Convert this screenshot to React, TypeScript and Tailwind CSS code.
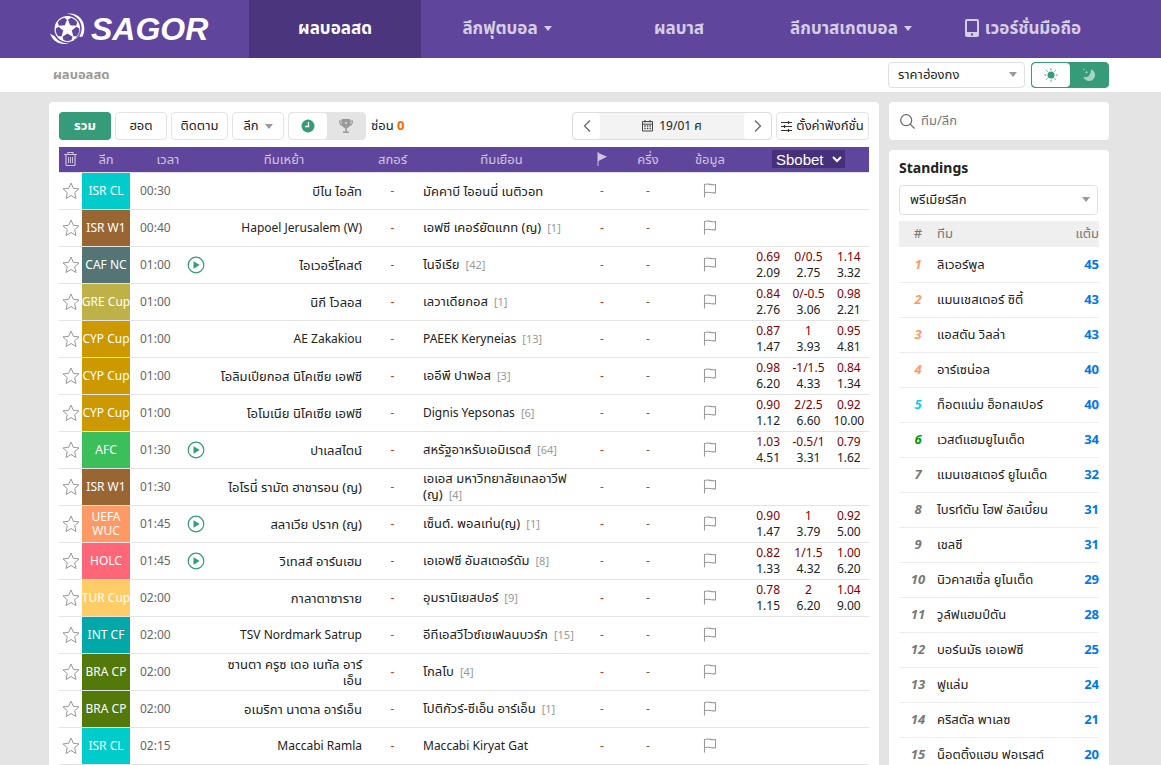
import type { ReactNode } from 'react';

interface Match {
  league: string;
  color: string;
  time: string;
  live?: boolean;
  home: string;
  away: string;
  rank?: number;
  odds?: string[][];
}

const MATCHES: Match[] = [
  { league: 'ISR CL', color: 'bg-[#00cccc]', time: '00:30', home: 'บีไน ไอลัท', away: 'มัคคาบี ไออนนี่ เนติวอท' },
  { league: 'ISR W1', color: 'bg-[#996633]', time: '00:40', home: 'Hapoel Jerusalem (W)', away: 'เอฟซี เคอร์ยัตแกท (ญ)', rank: 1 },
  { league: 'CAF NC', color: 'bg-[#557575]', time: '01:00', live: true, home: 'ไอเวอรี่โคสต์', away: 'ไนจีเรีย', rank: 42, odds: [['0.69', '0/0.5', '1.14'], ['2.09', '2.75', '3.32']] },
  { league: 'GRE Cup', color: 'bg-[#bdb147]', time: '01:00', home: 'นิกี โวลอส', away: 'เลวาเดียกอส', rank: 1, odds: [['0.84', '0/-0.5', '0.98'], ['2.76', '3.06', '2.21']] },
  { league: 'CYP Cup', color: 'bg-[#cc9900]', time: '01:00', home: 'AE Zakakiou', away: 'PAEEK Keryneias', rank: 13, odds: [['0.87', '1', '0.95'], ['1.47', '3.93', '4.81']] },
  { league: 'CYP Cup', color: 'bg-[#cc9900]', time: '01:00', home: 'โอลิมเปียกอส นิโคเซีย เอฟซี', away: 'เออีพี ปาฟอส', rank: 3, odds: [['0.98', '-1/1.5', '0.84'], ['6.20', '4.33', '1.34']] },
  { league: 'CYP Cup', color: 'bg-[#cc9900]', time: '01:00', home: 'โอโมเนีย นิโคเซีย เอฟซี', away: 'Dignis Yepsonas', rank: 6, odds: [['0.90', '2/2.5', '0.92'], ['1.12', '6.60', '10.00']] },
  { league: 'AFC', color: 'bg-[#3abf5b]', time: '01:30', live: true, home: 'ปาเลสไตน์', away: 'สหรัฐอาหรับเอมิเรตส์', rank: 64, odds: [['1.03', '-0.5/1', '0.79'], ['4.51', '3.31', '1.62']] },
  { league: 'ISR W1', color: 'bg-[#996633]', time: '01:30', home: 'ไอโรนี่ รามัต ฮาชารอน (ญ)', away: 'เอเอส มหาวิทยาลัยเทลอาวีฟ (ญ)', rank: 4 },
  { league: 'UEFA WUC', color: 'bg-[#ff9966]', time: '01:45', live: true, home: 'สลาเวีย ปราก (ญ)', away: 'เซ็นต์. พอลเท่น(ญ)', rank: 1, odds: [['0.90', '1', '0.92'], ['1.47', '3.79', '5.00']] },
  { league: 'HOLC', color: 'bg-[#ff6677]', time: '01:45', live: true, home: 'วิเทสส์ อาร์นเฮม', away: 'เอเอฟซี อัมสเตอร์ดัม', rank: 8, odds: [['0.82', '1/1.5', '1.00'], ['1.33', '4.32', '6.20']] },
  { league: 'TUR Cup', color: 'bg-[#ffcc66]', time: '02:00', home: 'กาลาตาซาราย', away: 'อุมรานิเยสปอร์', rank: 9, odds: [['0.78', '2', '1.04'], ['1.15', '6.20', '9.00']] },
  { league: 'INT CF', color: 'bg-[#00a8a8]', time: '02:00', home: 'TSV Nordmark Satrup', away: 'อีทีเอสวีไวซ์เชเฟลนบวร์ก', rank: 15 },
  { league: 'BRA CP', color: 'bg-[#54790b]', time: '02:00', home: 'ซานตา ครูซ เดอ เนทัล อาร์เอ็น', away: 'โกลโบ', rank: 4 },
  { league: 'BRA CP', color: 'bg-[#54790b]', time: '02:00', home: 'อเมริกา นาตาล อาร์เอ็น', away: 'โปติกัวร์-ซีเอ็น อาร์เอ็น', rank: 1 },
  { league: 'ISR CL', color: 'bg-[#00cccc]', time: '02:15', home: 'Maccabi Ramla', away: 'Maccabi Kiryat Gat' },
];

const STANDINGS: [string, number, string][] = [
  ['ลิเวอร์พูล', 45, 'text-[#ff9966]'],
  ['แมนเชสเตอร์ ซิตี้', 43, 'text-[#ff9966]'],
  ['แอสตัน วิลล่า', 43, 'text-[#ff9966]'],
  ['อาร์เซน่อล', 40, 'text-[#ff9966]'],
  ['ท็อตแน่ม ฮ็อทสเปอร์', 40, 'text-[#00ccff]'],
  ['เวสต์แฮมยูไนเต็ด', 34, 'text-[#009900]'],
  ['แมนเชสเตอร์ ยูไนเต็ด', 32, 'text-[#777]'],
  ['ไบรท์ตัน โฮฟ อัลเบี้ยน', 31, 'text-[#777]'],
  ['เชลซี', 31, 'text-[#777]'],
  ['นิวคาสเซิ่ล ยูไนเต็ด', 29, 'text-[#777]'],
  ['วูล์ฟแฮมป์ตัน', 28, 'text-[#777]'],
  ['บอร์นมัธ เอเอฟซี', 25, 'text-[#777]'],
  ['ฟูแล่ม', 24, 'text-[#777]'],
  ['คริสตัล พาเลซ', 21, 'text-[#777]'],
  ['น็อตติ้งแฮม ฟอเรสต์', 20, 'text-[#777]'],
];

const BUTTON = 'flex h-7 items-center justify-center rounded border border-[#e4e4e4] bg-white text-[13px]';

// Thai glyphs look smaller than Latin ones at the same size
const nameSize = (name: string) => (/[\u0e00-\u0e7f]/.test(name) ? 'text-[13px]' : 'text-xs');

function Caret({ className = '' }: { className?: string }) {
  return (
    <svg className={className} width="8" height="5" viewBox="0 0 8 5" fill="currentColor" aria-hidden="true">
      <path d="M0 0h8L4 5z" />
    </svg>
  );
}

function Logo() {
  return (
    <a href="#" className="flex w-[200px] shrink-0 items-center text-white">
      <svg width="38" height="34" viewBox="0 0 38 34" aria-hidden="true">
        <circle cx="18.5" cy="17" r="13" fill="#fff" />
        <g fill="#5f459c">
          {[0, 72, 144, 216, 288].map((angle) => (
            <path key={angle} transform={`translate(18.5 17) rotate(${angle})`} d="M0 4.500L5 7.800 4 11Q0 12.800-4 11L-5 7.800z" />
          ))}
        </g>
        <path d="M18 1.800c9.600-2 17.800 5.400 17.300 15.700-.1 2.600-.8 4.800-1.800 7-1.100.5-2.200.5-3.200 0 3.300-5.200 3.200-12.400-.8-17C26.700 4.200 23 2.100 18 1.800z" fill="#fff" />
        <path d="M1 21.500c1.700 1.900 4.400 1.500 5.400 3.700C9.600 30 15.700 32 21.500 30.600c-8 3.500-17.200.4-20.500-9.100z" fill="#fff" />
        <path d="M17.500 3.300c6.700-.8 12.700 4.200 13.800 10.600 1 5.700-1.800 11.300-6.500 14.300" fill="none" stroke="#5f459c" strokeWidth=".8" />
      </svg>
      <span className="pl-1 font-['Liberation_Sans',Arial,sans-serif] text-[32px] leading-9 font-bold italic">SAGOR</span>
    </a>
  );
}

function Star() {
  return (
    <svg width="18" height="18" viewBox="0 0 18 18" fill="none" stroke="#999" strokeWidth="1" strokeLinejoin="round" aria-hidden="true">
      <path d="M9 1l2.300 5.300 5.700.6-4.300 3.800L14 16.500 9 13.500l-5 3 1.300-5.800L1 6.900l5.700-.6z" />
    </svg>
  );
}

function Flag() {
  return (
    <svg width="14" height="15" viewBox="0 0 14 15" fill="none" stroke="#9a9a9a" strokeWidth="1.100" aria-hidden="true">
      <path d="M1.500 14.500V1.500c4-1.700 6.500 1.200 11 .1v8c-4.500 1.200-7-1.600-11 .2" />
    </svg>
  );
}

function PlayIcon() {
  return (
    <svg width="18" height="18" viewBox="0 0 18 18" aria-hidden="true">
      <circle cx="9" cy="9" r="7.800" fill="none" stroke="#359b79" strokeWidth="1.200" />
      <path d="M6.500 5.200L12.700 9l-6.200 3.800z" fill="#359b79" />
    </svg>
  );
}

function NavItem({ active, children }: { active?: boolean; children: ReactNode }) {
  return (
    <a
      href="#"
      className={`flex min-w-0 flex-1 items-center justify-center pb-0.5 text-[17px] font-bold whitespace-nowrap ${
        active ? 'bg-[#4b357c] text-white' : 'text-[#d6cee6]'
      }`}
    >
      {children}
    </a>
  );
}

function Header() {
  return (
    <header className="bg-[#5f459c] pr-[52px] pl-[49px]">
      <div className="flex h-[58px]">
        <Logo />
        <nav className="flex flex-1">
          <NavItem active>ผลบอลสด</NavItem>
          <NavItem>
            ลีกฟุตบอล
            <Caret className="ml-1.5" />
          </NavItem>
          <NavItem>ผลบาส</NavItem>
          <NavItem>
            ลีกบาสเกตบอล
            <Caret className="ml-1.5" />
          </NavItem>
          <NavItem>
            <svg className="mr-1.5" width="14" height="18" viewBox="0 0 14 18" aria-hidden="true">
              <path fill="currentColor" fillRule="evenodd" d="M2 0h10a2 2 0 0 1 2 2v14a2 2 0 0 1-2 2H2a2 2 0 0 1-2-2V2a2 2 0 0 1 2-2zm0 2v11h10V2zm4 12.500h2v2H6z" />
            </svg>
            เวอร์ชั่นมือถือ
          </NavItem>
        </nav>
      </div>
    </header>
  );
}

function SubBar() {
  return (
    <div className="flex h-[34px] items-center bg-white pr-[52px] pl-[53px]">
      <h1 className="flex-1 text-[13px] font-bold text-[#999]">ผลบอลสด</h1>
      <div className="relative">
        <select aria-label="ราคา" className="h-[26px] w-[137px] appearance-none rounded border border-[#e0e0e0] bg-white px-[9px] text-[13px] text-[#222]">
          <option>ราคาฮ่องกง</option>
        </select>
        <Caret className="pointer-events-none absolute top-2.5 right-2 text-[#999]" />
      </div>
      <div className="ml-1.5 flex h-[26px] w-[78px] overflow-hidden rounded border border-[#359b79] bg-[#359b79]">
        <button aria-label="โหมดสว่าง" className="flex flex-1 items-center justify-center rounded bg-white">
          <svg width="14" height="14" viewBox="0 0 14 14" aria-hidden="true">
            <circle cx="7" cy="7" r="3.500" fill="#359b79" />
            <path d="M7 .5v1.800M7 11.700v1.800M.5 7h1.800M11.700 7h1.800M2.400 2.400l1.200 1.200M10.400 10.400l1.200 1.200M11.600 2.400l-1.200 1.200M3.600 10.400l-1.200 1.200" stroke="#359b79" strokeWidth="1" />
          </svg>
        </button>
        <button aria-label="โหมดมืด" className="flex flex-1 items-center justify-center">
          <svg width="14" height="14" viewBox="0 0 14 14" fill="#a5d3c5" aria-hidden="true">
            <path d="M8.800 1.200a6 6 0 1 1-7.500 7.500c1.500.8 3.600.7 5.300-.8 2-1.800 2.600-4.400 2.200-6.700z" />
            <path d="M4.500 2.500l.5 1.300 1.300.5L5 4.800l-.5 1.300L4 4.800l-1.300-.5L4 3.800zM2 .5l.3.8.8.3-.8.3L2 2.700l-.3-.8-.8-.3.8-.3z" />
          </svg>
        </button>
      </div>
    </div>
  );
}

function Toolbar() {
  return (
    <div className="flex items-center gap-1">
      <button className="h-7 w-[52px] rounded bg-[#359b79] text-[13px] font-bold text-white">รวม</button>
      <button className={`${BUTTON} w-[52px]`}>ฮอต</button>
      <button className={`${BUTTON} w-[57px]`}>ติดตาม</button>
      <button className={`${BUTTON} w-[52px]`}>
        ลีก
        <Caret className="ml-1.5 text-[#999]" />
      </button>
      <div className="flex h-7 w-[78px] overflow-hidden rounded border border-[#e4e4e4] bg-[#e4e4e4]">
        <button aria-label="เรียงตามเวลา" className="flex flex-1 items-center justify-center rounded bg-white">
          <svg width="14" height="14" viewBox="0 0 14 14" aria-hidden="true">
            <circle cx="7" cy="7" r="6.500" fill="#359b79" />
            <path d="M7.500 3v4.500H4" fill="none" stroke="#fff" strokeWidth="1.300" />
          </svg>
        </button>
        <button aria-label="เรียงตามลีก" className="flex flex-1 items-center justify-center">
          <svg width="14" height="14" viewBox="0 0 14 14" fill="none" stroke="#999" aria-hidden="true">
            <path d="M3 .5h8v4.500c0 2-1.500 3.500-4 4-2.500-.5-4-2-4-4z" fill="#999" />
            <path d="M3 2H.6c0 2.800 1 4 3 4.500M11 2h2.400c0 2.800-1 4-3 4.500" strokeWidth="1.200" />
            <path d="M7 9v4M4 13.300h6" strokeWidth="1.500" />
            <circle cx="7" cy="4" r="1" fill="#e4e4e4" stroke="none" />
          </svg>
        </button>
      </div>
      <span className="pl-px text-[13px]">
        ซ่อน <b className="text-[#ff6600]">0</b>
      </span>
      <div className="ml-auto flex h-7 w-[200px] overflow-hidden rounded border border-[#ddd] bg-[#f3f3f3]">
        <button aria-label="วันก่อนหน้า" className="flex w-[27px] items-center justify-center rounded bg-white">
          <svg width="8" height="12" viewBox="0 0 8 12" fill="none" stroke="#666" strokeWidth="1.300" aria-hidden="true">
            <path d="M7 .5L1.500 6 7 11.500" />
          </svg>
        </button>
        <button className="flex flex-1 items-center justify-center gap-1.5">
          <svg width="11" height="12" viewBox="0 0 11 12" fill="none" stroke="#444" aria-hidden="true">
            <path d="M.5 1.500h10v9.500H.5zM.5 4.200h10M3 0v2.500M8 0v2.500" />
            <path d="M2.300 6h6.800M2.300 8.500h6.800" strokeWidth="1.300" strokeDasharray="1.400 1.200" />
          </svg>
          19/01 ศ
        </button>
        <button aria-label="วันถัดไป" className="flex w-[27px] items-center justify-center rounded bg-white">
          <svg width="8" height="12" viewBox="0 0 8 12" fill="none" stroke="#666" strokeWidth="1.300" aria-hidden="true">
            <path d="M1 .5L6.500 6 1 11.500" />
          </svg>
        </button>
      </div>
      <button className={`${BUTTON} w-[93px] gap-1 whitespace-nowrap`}>
        <svg className="shrink-0" width="11" height="11" viewBox="0 0 11 11" fill="none" stroke="#333" aria-hidden="true">
          <path d="M0 1.500h11M0 5.500h11M0 9.500h11M7.500 0v3M3.500 4v3M7.500 8v3" strokeWidth="1.200" />
        </svg>
        ตั้งค่าฟังก์ชั่น
      </button>
    </div>
  );
}

function MatchRow({ match }: { match: Match }) {
  return (
    <tr className="h-[37px] border-b border-[#e4e4e4]">
      <td>
        <button aria-label="ติดตาม" className="flex w-full justify-center">
          <Star />
        </button>
      </td>
      <td className={`${match.color} text-center leading-[14px] text-white`}>
        <span className={match.league.endsWith('Cup') ? 'flex justify-center whitespace-nowrap' : ''}>{match.league}</span>
      </td>
      <td className="pl-2.5 text-[#666]">
        <div className="flex items-center">
          <span className="flex-1">{match.time}</span>
          {match.live && (
            <button aria-label="ถ่ายทอดสด" className="mr-px">
              <PlayIcon />
            </button>
          )}
        </div>
      </td>
      <td className={`pl-2.5 text-right leading-4 ${nameSize(match.home)}`}>{match.home}</td>
      <td className="text-center text-[#dd3333]">-</td>
      <td className={`pr-1 leading-4 ${nameSize(match.away)}`}>
        {match.away}
        {match.rank && <span className="ml-1.5 text-[11px] text-[#999]">[{match.rank}]</span>}
      </td>
      <td className="text-center text-[#dd3333]">-</td>
      <td className="text-center text-[#666]">-</td>
      <td>
        <a href="#" aria-label="ข้อมูล" className="flex justify-center">
          <Flag />
        </a>
      </td>
      <td>
        {match.odds?.map((line, i) => (
          <div key={i} className={`grid grid-cols-3 text-center leading-4 whitespace-nowrap ${i === 0 ? 'text-[#800000]' : 'text-[#222]'}`}>
            {line.map((value, j) => (
              <span key={j}>{value}</span>
            ))}
          </div>
        ))}
      </td>
    </tr>
  );
}

function MatchTable() {
  return (
    <table className="mt-[7px] w-full table-fixed border-collapse">
      <colgroup>
        <col className="w-[23px]" />
        <col className="w-[48px]" />
        <col className="w-[76px]" />
        <col />
        <col className="w-[61px]" />
        <col className="w-[157px]" />
        <col className="w-[44px]" />
        <col className="w-[48px]" />
        <col className="w-[76px]" />
        <col className="w-[121px]" />
      </colgroup>
      <thead>
        <tr className="h-[25px] border-b border-[#e4e4e4] bg-[#5f459c] text-[13px] leading-5 text-[#d0c6e2] *:font-normal">
          <th>
            <button aria-label="ลบทั้งหมด" className="flex w-full justify-center">
              <svg width="13" height="14" viewBox="0 0 13 14" fill="none" stroke="#cbbfe0" aria-hidden="true">
                <path d="M0 2.500h13M4 2V.5h5V2M2 3v9.500q0 1 1 1h7q1 0 1-1V3" strokeWidth="1.200" />
                <path d="M4.500 5v6M6.500 5v6M8.500 5v6" />
              </svg>
            </button>
          </th>
          <th>ลีก</th>
          <th>เวลา</th>
          <th>ทีมเหย้า</th>
          <th>สกอร์</th>
          <th>ทีมเยือน</th>
          <th aria-label="เตะมุม">
            <svg className="mx-auto" width="10" height="14" viewBox="0 0 10 14" aria-hidden="true">
              <path d="M.5 0h1v14h-1zM1.500 1L10 4.800 1.500 9z" fill="#d0c6e2" />
            </svg>
          </th>
          <th>ครึ่ง</th>
          <th>ข้อมูล</th>
          <th>
            <select aria-label="Odds" className="mx-auto block h-[18px] w-[73px] bg-[#47307a] font-['Liberation_Sans',Arial,sans-serif] text-[15px] leading-[18px] text-white">
              <option>Sbobet</option>
            </select>
          </th>
        </tr>
      </thead>
      <tbody>
        {MATCHES.map((match, i) => (
          <MatchRow key={i} match={match} />
        ))}
      </tbody>
    </table>
  );
}

function Sidebar() {
  return (
    <aside className="flex w-[220px] shrink-0 flex-col gap-2.5">
      <label className="flex h-[38px] shrink-0 items-center gap-1.5 rounded bg-white px-[11px]">
        <svg className="shrink-0" width="15" height="15" viewBox="0 0 15 15" fill="none" stroke="#666" strokeWidth="1.200" aria-hidden="true">
          <circle cx="6.200" cy="6.200" r="5.500" />
          <path d="M10.200 10.200l4.300 4.300" />
        </svg>
        <input type="text" aria-label="ทีม/ลีก" placeholder="ทีม/ลีก" className="w-full min-w-0 text-[13px] outline-none placeholder:text-[#777]" />
      </label>

      <section className="flex-1 rounded-t bg-white px-2.5 pt-2">
        <h2 className="h-[27px] text-sm leading-5 font-bold">Standings</h2>
        <div className="relative mb-1.5">
          <select aria-label="ลีก" className="block h-[30px] w-[199px] appearance-none rounded border border-[#e0e0e0] bg-white px-2.5 text-[13px]">
            <option>พรีเมียร์ลีก</option>
          </select>
          <Caret className="pointer-events-none absolute top-3 right-[9px] text-[#999]" />
        </div>
        <table className="w-full table-fixed border-collapse text-[13px]">
          <thead>
            <tr className="h-[26px] bg-[#efefef] text-left text-[#777] *:font-normal">
              <th className="w-[38px] text-center">#</th>
              <th>ทีม</th>
              <th className="w-10 text-right">แต้ม</th>
            </tr>
          </thead>
          <tbody>
            {STANDINGS.map(([team, points, color], i) => (
              <tr key={team} className="h-[35px] border-b border-[#eee]">
                <td className={`text-center font-bold italic ${color}`}>{i + 1}</td>
                <td className="whitespace-nowrap">{team}</td>
                <td className="text-right font-bold text-[#0077e6]">{points}</td>
              </tr>
            ))}
          </tbody>
        </table>
      </section>
    </aside>
  );
}

export default function App() {
  return (
    <div className="flex h-screen flex-col overflow-hidden bg-[#e4e4e4] font-['Noto_Sans','Noto_Sans_Thai',Tahoma,sans-serif] text-xs text-[#222]">
      <Header />
      <SubBar />
      <div className="flex min-h-0 flex-1 gap-2.5 pt-2.5 pr-[52px] pl-[49px]">
        <main className="min-w-0 flex-1 rounded-t bg-white px-2.5 pt-2.5">
          <Toolbar />
          <MatchTable />
        </main>
        <Sidebar />
      </div>
    </div>
  );
}
